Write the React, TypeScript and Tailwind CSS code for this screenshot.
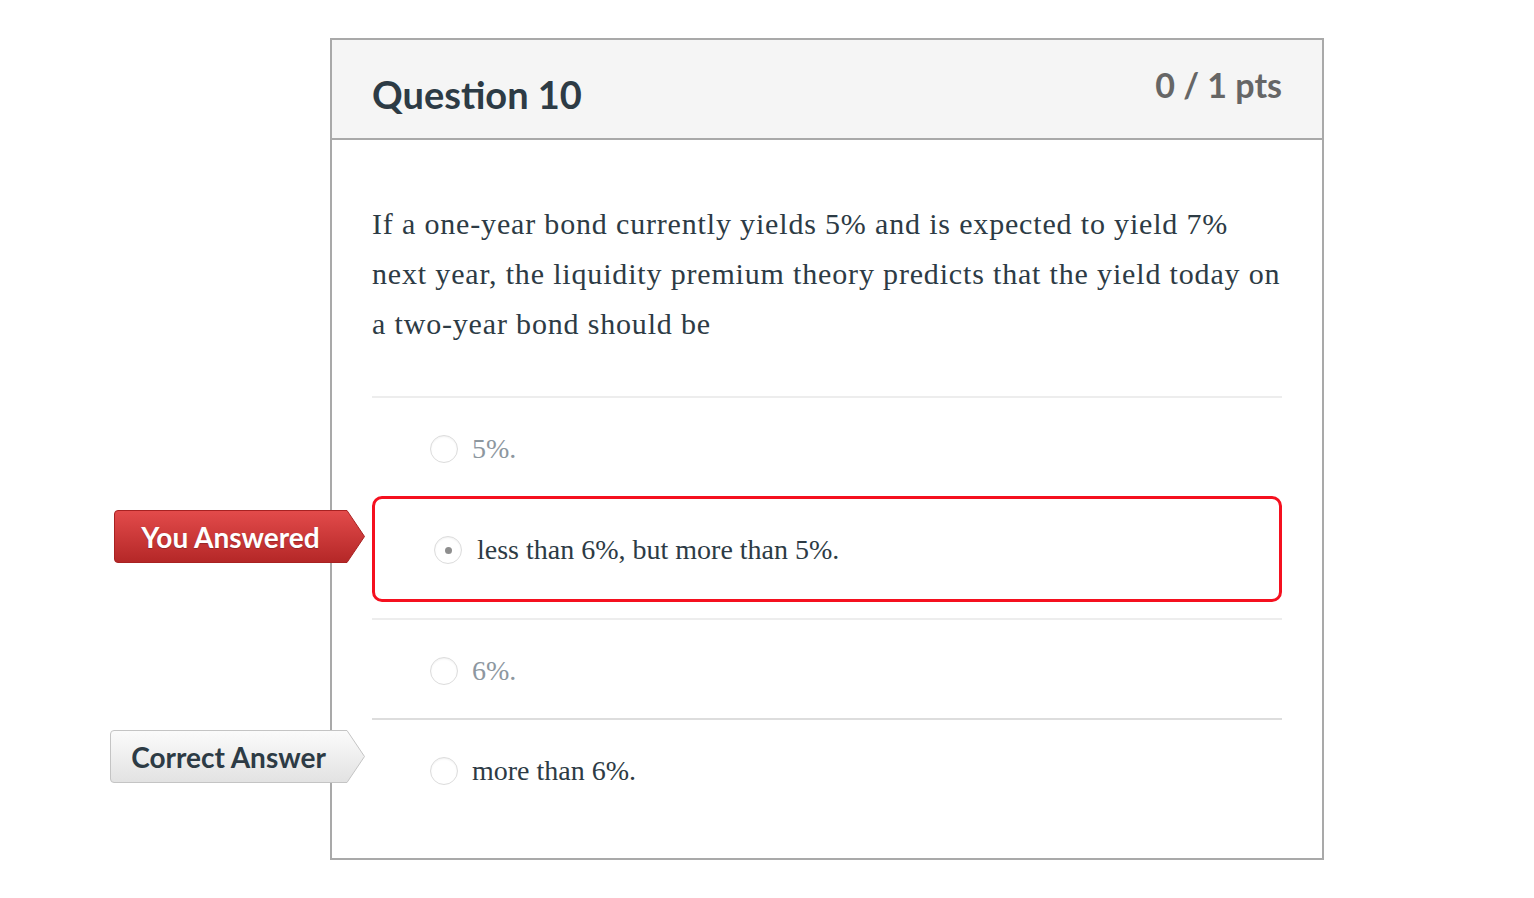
import type { ReactNode } from 'react';

const lato = { fontFamily: 'Lato, "Liberation Sans", sans-serif' };

type Answer = { text: string; state: 'plain' | 'chosen' | 'correct' };

function Radio({ checked = false }: { checked?: boolean }) {
  return (
    <span className="flex h-[28px] w-[28px] shrink-0 items-center justify-center rounded-full border border-[#dcdcdc] bg-white shadow-[inset_0_1px_2px_rgba(0,0,0,0.06)]">
      {checked && <span className="h-[7px] w-[7px] rounded-full bg-[#8e8e8e]" />}
    </span>
  );
}

function Tag({ tone, width, children }: { tone: 'red' | 'gray'; width: number; children: ReactNode }) {
  const h = 53;
  const body = width - 18;
  const id = tone === 'red' ? 'tag-red' : 'tag-gray';
  return (
    <div className="relative flex h-[53px] items-center" style={{ width }}>
      <svg className="absolute inset-0" width={width} height={h} viewBox={`0 0 ${width} ${h}`}>
        <defs>
          <linearGradient id={id} x1="0" y1="0" x2="0" y2="1">
            {tone === 'red' ? (
              <>
                <stop offset="0" stopColor="#e34b4b" />
                <stop offset="1" stopColor="#b42727" />
              </>
            ) : (
              <>
                <stop offset="0" stopColor="#fbfbfb" />
                <stop offset="1" stopColor="#e2e2e2" />
              </>
            )}
          </linearGradient>
        </defs>
        <path
          d={`M4 0.5 H${body} L${width - 0.5} ${h / 2} L${body} ${h - 0.5} H4 Q0.5 ${h - 0.5} 0.5 ${h - 4} V4 Q0.5 0.5 4 0.5 Z`}
          fill={`url(#${id})`}
          stroke={tone === 'red' ? '#a82222' : '#c4c4c4'}
          strokeWidth="1"
        />
      </svg>
      <span
        className={`relative w-full pr-[18px] text-center text-[28px] font-bold leading-none ${
          tone === 'red' ? 'text-white [text-shadow:0_1px_1px_rgba(0,0,0,0.25)]' : 'text-[#2d3b45]'
        }`}
        style={lato}
      >
        {children}
      </span>
    </div>
  );
}

const answers: Answer[] = [
  { text: '5%.', state: 'plain' },
  { text: 'less than 6%, but more than 5%.', state: 'chosen' },
  { text: '6%.', state: 'plain' },
  { text: 'more than 6%.', state: 'correct' },
];

export default function App() {
  const serif = { fontFamily: '"Liberation Serif", "Times New Roman", serif' };

  return (
    <div className="min-h-[898px] bg-white pt-[38px]">
      <div className="ml-[330px] w-[994px] border-2 border-[#a9a9a9] bg-white">
        <header className="flex h-[100px] justify-between border-b-2 border-[#a9a9a9] bg-[#f5f5f5] px-10">
          <h2 className="mt-[35px] text-[38px] font-bold leading-none text-[#2d3b45]" style={lato}>
            Question 10
          </h2>
          <div className="mt-[28px] text-[34px] font-bold leading-none text-[#666666]" style={lato}>
            0 / 1 pts
          </div>
        </header>

        <div className="px-10 pb-[38px] pt-[59px]" style={serif}>
          <p className="text-[30px] leading-[50px] tracking-[0.83px] text-[#2d3b45]">
            If a one-year bond currently yields 5% and is expected to yield 7% next year, the
            liquidity premium theory predicts that the yield today on a two-year bond should be
          </p>

          <div className="mt-[47px] h-[2px] bg-[#ededed]" />

          {/* 5% */}
          <div className="flex h-[98px] items-center gap-[14px] pl-[58px] pt-[4px]">
            <Radio />
            <span className="text-[28px] text-[#8d979f]">{answers[0].text}</span>
          </div>

          {/* chosen, wrong */}
          <div className="relative flex h-[106px] items-center gap-[15px] rounded-[10px] border-[3px] border-[#f5101f] pl-[59px] pt-[2px]">
            <div className="absolute left-[-261px] top-[11px]">
              <Tag tone="red" width={251}>You Answered</Tag>
            </div>
            <Radio checked />
            <span className="text-[28px] text-[#2d3b45]">{answers[1].text}</span>
          </div>

          <div className="mt-[16px] h-[2px] bg-[#ededed]" />

          {/* 6% */}
          <div className="flex h-[98px] items-center gap-[14px] pl-[58px] pt-[4px]">
            <Radio />
            <span className="text-[28px] text-[#8d979f]">{answers[2].text}</span>
          </div>

          <div className="h-[2px] bg-[#dddddd]" />

          {/* correct */}
          <div className="relative flex h-[100px] items-center gap-[14px] pl-[58px] pt-[2px]">
            <div className="absolute left-[-262px] top-[10px]">
              <Tag tone="gray" width={255}>Correct Answer</Tag>
            </div>
            <Radio />
            <span className="text-[28px] text-[#2d3b45]">{answers[3].text}</span>
          </div>
        </div>
      </div>
    </div>
  );
}
